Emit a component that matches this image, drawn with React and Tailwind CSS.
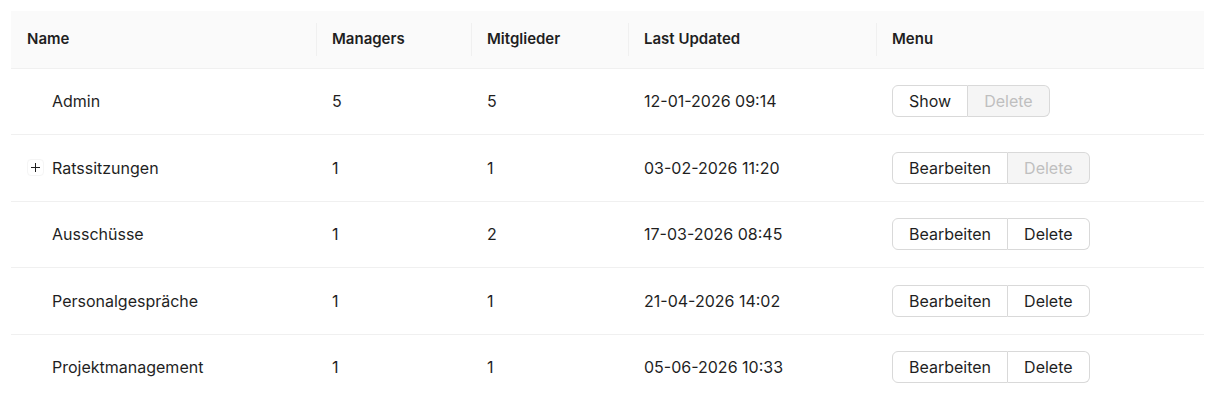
import React from "react";

const rows = [
  { name: "Admin", managers: 5, members: 5, updated: "12-01-2026 09:14", edit: "Show", canDelete: false },
  { name: "Ratssitzungen", managers: 1, members: 1, updated: "03-02-2026 11:20", edit: "Bearbeiten", canDelete: false, expandable: true },
  { name: "Ausschüsse", managers: 1, members: 2, updated: "17-03-2026 08:45", edit: "Bearbeiten", canDelete: true },
  { name: "Personalgespräche", managers: 1, members: 1, updated: "21-04-2026 14:02", edit: "Bearbeiten", canDelete: true },
  { name: "Projektmanagement", managers: 1, members: 1, updated: "05-06-2026 10:33", edit: "Bearbeiten", canDelete: true },
];

const HeadCell = ({ children, w, first }) => (
  <th className={`${w} relative text-left font-semibold text-[15px] px-4 h-[57px]`}>
    {!first && <span className="absolute left-0 top-[12px] bottom-[12px] w-px bg-[#f0f0f0]" />}
    {children}
  </th>
);

const App = () => {
  return (
    <div className="bg-white px-[11px] pt-[11px] w-[1225px] h-[400px] overflow-hidden" style={{ fontFamily: "Inter, 'Liberation Sans', sans-serif" }}>
      <table className="w-[1193px] table-fixed border-collapse text-[16px] text-[#1f1f1f]">
        <thead>
          <tr className="bg-[#fafafa] border-b border-[#f0f0f0]">
            <HeadCell w="w-[305px]" first>Name</HeadCell>
            <HeadCell w="w-[155px]">Managers</HeadCell>
            <HeadCell w="w-[157px]">Mitglieder</HeadCell>
            <HeadCell w="w-[248px]">Last Updated</HeadCell>
            <HeadCell w="w-[328px]">Menu</HeadCell>
          </tr>
        </thead>
        <tbody>
          {rows.map((r) => (
            <tr key={r.name} className="border-b border-[#f0f0f0] h-[66.5px]">
              <td className="px-4">
                <div className="flex items-center">
                  {r.expandable ? (
                    <span className="w-[17px] h-[17px] mr-[8px] rounded-[4px] border border-[#f5f5f5] flex items-center justify-center">
                      <svg width="11" height="11" viewBox="0 0 11 11">
                        <path d="M5.5 1v9M1 5.5h9" stroke="#1f1f1f" strokeWidth="1" />
                      </svg>
                    </span>
                  ) : (
                    <span className="w-[17px] mr-[8px]" />
                  )}
                  <span>{r.name}</span>
                </div>
              </td>
              <td className="px-4">{r.managers}</td>
              <td className="px-4">{r.members}</td>
              <td className="px-4">{r.updated}</td>
              <td className="px-4">
                <div className="flex">
                  <button className="h-[32px] px-4 border border-[#d9d9d9] rounded-l-[6px] bg-white">
                    {r.edit}
                  </button>
                  <button
                    className={`h-[32px] px-4 border border-l-0 border-[#d9d9d9] rounded-r-[6px] ${
                      r.canDelete ? "bg-white" : "bg-[#f5f5f5] text-[#bfbfbf]"
                    }`}
                  >
                    Delete
                  </button>
                </div>
              </td>
            </tr>
          ))}
        </tbody>
      </table>
    </div>
  );
};

export default App;
